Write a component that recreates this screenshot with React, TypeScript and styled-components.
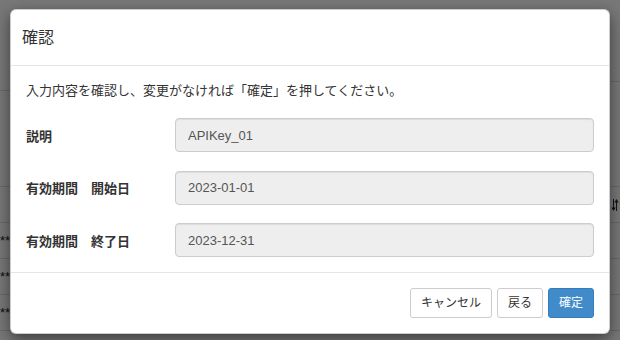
import { Fragment } from "react";
import styled, { createGlobalStyle } from "styled-components";

const GlobalStyle = createGlobalStyle`
  html, body {
    margin: 0;
    padding: 0;
  }
  body {
    width: 620px;
    height: 340px;
    overflow: hidden;
    font-family: "Liberation Sans", "Noto Sans CJK JP", sans-serif;
    color: #333;
  }
`;

const fields = [
    { label: "説明", value: "APIKey_01" },
    { label: "有効期間\u3000開始日", value: "2023-01-01" },
    { label: "有効期間\u3000終了日", value: "2023-12-31" },
];

const Page = styled.div`
  position: relative;
  width: 620px;
  height: 340px;
  background: #fff;
  overflow: hidden;
`;

const TopStrip = styled.div`
  display: flex;
  align-items: flex-start;
`;

const StripCell = styled.div<{ $h: number }>`
  flex: 1;
  height: ${(p) => p.$h}px;
  border-bottom: 1px solid #ddd;
`;

const Table = styled.div`
  margin-top: 95px;
  border-top: 1px solid #ddd;
`;

const Row = styled.div`
  display: grid;
  grid-template-columns: 456px 1fr;
  height: 35px;
  border-bottom: 1px solid #ddd;
  font-size: 13px;
`;

const Cell = styled.div<{ $end?: boolean }>`
  display: flex;
  align-items: center;
  justify-content: ${(p) => (p.$end ? "flex-end" : "flex-start")};
  border-right: 1px solid #ddd;
  white-space: nowrap;
  overflow: hidden;
  &:last-child {
    border-right: none;
  }
`;

const Masked = styled.span`
  display: block;
  width: 10px;
  overflow: hidden;
  color: #222;
`;

const SortIcon = styled.svg`
  display: block;
  margin-right: 1px;
`;

const Backdrop = styled.div`
  position: absolute;
  inset: 0;
  background: rgba(0, 0, 0, 0.53);
`;

const Dialog = styled.div`
  position: absolute;
  left: 10px;
  top: 9px;
  width: 600px;
  box-sizing: border-box;
  background: #fff;
  border: 1px solid rgba(0, 0, 0, 0.2);
  border-radius: 6px;
  box-shadow: 0 5px 15px rgba(0, 0, 0, 0.5);
`;

const Header = styled.div`
  padding: 15px 11px;
  border-bottom: 1px solid #e5e5e5;
`;

const Title = styled.h4`
  margin: 0;
  font-size: 16px;
  line-height: 25px;
  font-weight: 400;
  color: #333;
`;

const Body = styled.div`
  padding: 15px;
  font-size: 13px;
`;

const Lead = styled.p`
  margin: 0 0 17px;
  line-height: 20px;
  color: #333;
`;

const FormGrid = styled.div`
  display: grid;
  grid-template-columns: 149px 1fr;
  row-gap: 18.5px;
  align-items: center;
`;

const Label = styled.label`
  font-weight: bold;
  color: #333;
  white-space: pre;
`;

const Field = styled.input`
  box-sizing: border-box;
  width: 100%;
  height: 34px;
  padding: 6px 12px;
  font: 13px "Liberation Sans", "Noto Sans CJK JP", sans-serif;
  color: #555;
  background: #eee;
  border: 1px solid #ccc;
  border-radius: 4px;
  box-shadow: inset 0 1px 1px rgba(0, 0, 0, 0.075);
  outline: none;
`;

const Footer = styled.div`
  display: flex;
  justify-content: flex-end;
  gap: 5px;
  padding: 15px;
  border-top: 1px solid #e5e5e5;
`;

const Button = styled.button<{ $primary?: boolean }>`
  height: 30px;
  padding: 5px 10px;
  font: 12px/18px "Liberation Sans", "Noto Sans CJK JP", sans-serif;
  border-radius: 3px;
  cursor: pointer;
  border: 1px solid ${(p) => (p.$primary ? "#357ebd" : "#ccc")};
  background: ${(p) => (p.$primary ? "#428bca" : "#fff")};
  color: ${(p) => (p.$primary ? "#fff" : "#333")};
`;

const App = () => {
    return (
        <Page>
            <GlobalStyle />
            <TopStrip>
                <StripCell $h={90} />
                <StripCell $h={81} />
            </TopStrip>
            <Table>
                <Row>
                    <Cell />
                    <Cell $end>
                        <SortIcon width="8" height="12" viewBox="0 0 8 12">
                            <path d="M2 0v8.5H0.3L2.5 12 4.7 8.5H3V0z" fill="#0a2a5a" />
                            <path d="M6 12V3.5h1.7L5.5 0 3.3 3.5H5V12z" fill="#3a2a10" />
                        </SortIcon>
                    </Cell>
                </Row>
                {[0, 1, 2].map((i) => (
                    <Row key={i}>
                        <Cell>
                            <Masked>**</Masked>
                        </Cell>
                        <Cell />
                    </Row>
                ))}
            </Table>
            <Backdrop />
            <Dialog>
                <Header>
                    <Title>確認</Title>
                </Header>
                <Body>
                    <Lead>入力内容を確認し、変更がなければ「確定」を押してください。</Lead>
                    <FormGrid>
                        {fields.map((f) => (
                            <Fragment key={f.label}>
                                <Label>{f.label}</Label>
                                <Field readOnly value={f.value} />
                            </Fragment>
                        ))}
                    </FormGrid>
                </Body>
                <Footer>
                    <Button>キャンセル</Button>
                    <Button>戻る</Button>
                    <Button $primary>確定</Button>
                </Footer>
            </Dialog>
        </Page>
    );
};

export default App;
